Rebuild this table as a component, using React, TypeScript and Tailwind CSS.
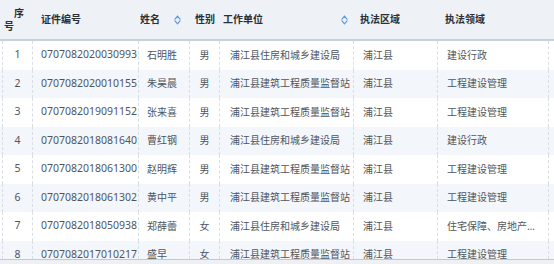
import React from "react";

type Row = {
    no: number;
    cert: string;
    name: string;
    sex: string;
    org: string;
    area: string;
    field: string;
};

const ROWS: Row[] = [
    { no: 1, cert: "0707082020030993", name: "石明胜", sex: "男", org: "浦江县住房和城乡建设局", area: "浦江县", field: "建设行政" },
    { no: 2, cert: "0707082020010155", name: "朱昊晨", sex: "男", org: "浦江县建筑工程质量监督站", area: "浦江县", field: "工程建设管理" },
    { no: 3, cert: "0707082019091152", name: "张来喜", sex: "男", org: "浦江县建筑工程质量监督站", area: "浦江县", field: "工程建设管理" },
    { no: 4, cert: "0707082018081640", name: "曹红钢", sex: "男", org: "浦江县住房和城乡建设局", area: "浦江县", field: "建设行政" },
    { no: 5, cert: "0707082018061300", name: "赵明辉", sex: "男", org: "浦江县建筑工程质量监督站", area: "浦江县", field: "工程建设管理" },
    { no: 6, cert: "0707082018061302", name: "黄中平", sex: "男", org: "浦江县建筑工程质量监督站", area: "浦江县", field: "工程建设管理" },
    { no: 7, cert: "0707082018050938", name: "郑薛蕾", sex: "女", org: "浦江县住房和城乡建设局", area: "浦江县", field: "住宅保障、房地产市场监管" },
    { no: 8, cert: "0707082017010217", name: "盛早", sex: "女", org: "浦江县建筑工程质量监督站", area: "浦江县", field: "工程建设管理" },
];

const COLS = "grid grid-cols-[3px_30px_106px_51px_30px_134px_84px_111px_5px]";

function SortIcon() {
    return (
        <svg width="7" height="10" viewBox="0 0 7 10" className="shrink-0">
            <path d="M3.5 1.2 L6 4.2 M3.5 1.2 L1 4.2 M3.5 8.8 L6 5.8 M3.5 8.8 L1 5.8" stroke="#5a9be0" strokeWidth="1.2" strokeLinecap="round" fill="none" />
        </svg>
    );
}

function Cell({ children, className = "" }: { children?: React.ReactNode; className?: string }) {
    return (
        <div className={`h-full flex items-center border-r border-dashed border-[#d9dee5] overflow-hidden whitespace-nowrap ${className}`}>
            {children}
        </div>
    );
}

export default function App() {
    return (
        <div className="w-[554px] h-[264px] overflow-hidden bg-white flex flex-col font-['Noto_Sans','Noto_Sans_CJK_SC',sans-serif] text-[10px]">
            <div className="flex-1 overflow-hidden">
                {/* header */}
                <div className={`${COLS} h-[41px] bg-[#eef2f6] border-b-2 border-[#c8d0d9] font-bold text-[#2b2f36]`}>
                    <div />
                    <div className="flex flex-col justify-center leading-[13px]">
                        <span className="ml-[11px]">序</span>
                        <span className="ml-[1px]">号</span>
                    </div>
                    <div className="flex items-center pl-[8px]">证件编号</div>
                    <div className="flex items-center pl-[1px] gap-[14px]">
                        <span>姓名</span>
                        <SortIcon />
                    </div>
                    <div className="flex items-center justify-center">性别</div>
                    <div className="flex items-center pl-[3px] gap-[78px]">
                        <span>工作单位</span>
                        <SortIcon />
                    </div>
                    <div className="flex items-center pl-[6px]">执法区域</div>
                    <div className="flex items-center pl-[7px]">执法领域</div>
                    <div />
                </div>

                {/* body */}
                {ROWS.map((r) => (
                    <div
                        key={r.no}
                        className={`${COLS} h-[28.5px] text-[#50555d] ${r.no % 2 === 0 ? "bg-[#f3f6fa]" : "bg-white"}`}
                    >
                        <Cell />
                        <Cell className="justify-center text-[10.5px]">{r.no}</Cell>
                        <Cell className="pl-[8px] text-[10.5px]">{r.cert}</Cell>
                        <Cell className="pl-[8px]">{r.name}</Cell>
                        <Cell className="justify-center">{r.sex}</Cell>
                        <Cell className="pl-[10px]">{r.org}</Cell>
                        <Cell className="pl-[9px]">{r.area}</Cell>
                        <Cell className="pl-[9px] pr-[10px]">
                            <span className="block overflow-hidden text-ellipsis">{r.field}</span>
                        </Cell>
                        <div />
                    </div>
                ))}
            </div>
            <div className="h-[5px] shrink-0 bg-[#eef0f3] border-t border-[#c3c8ce]" />
        </div>
    );
}
